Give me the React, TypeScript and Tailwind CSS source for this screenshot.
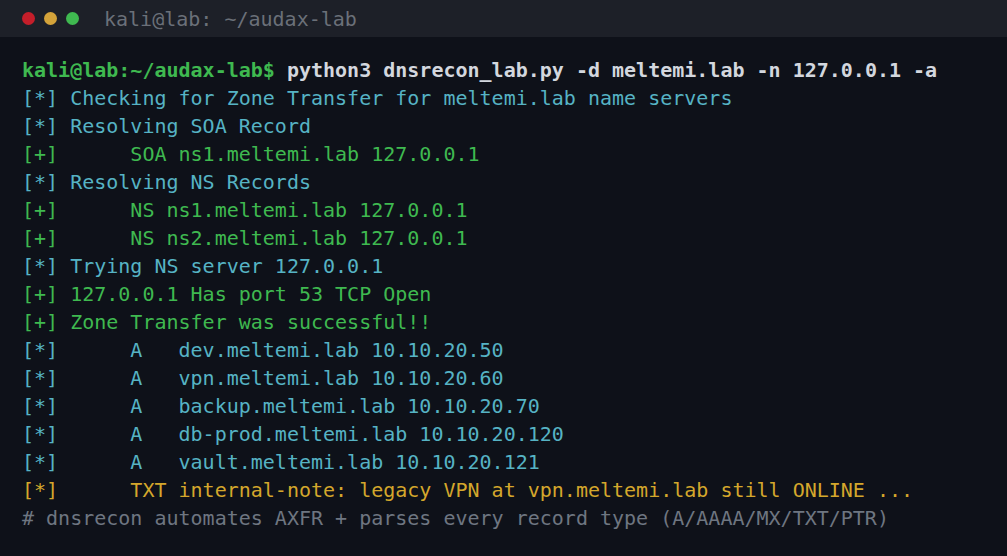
import React from 'react';

type Line = { parts: { text: string; cls: string }[] };

const cyan = 'text-[#56b3c4]';
const green = 'text-[#3fb950]';
const yellow = 'text-[#d4a72c]';
const gray = 'text-[#6e7681]';

const lines: Line[] = [
  { parts: [{ text: '[*] Checking for Zone Transfer for meltemi.lab name servers', cls: cyan }] },
  { parts: [{ text: '[*] Resolving SOA Record', cls: cyan }] },
  { parts: [{ text: '[+]      SOA ns1.meltemi.lab 127.0.0.1', cls: green }] },
  { parts: [{ text: '[*] Resolving NS Records', cls: cyan }] },
  { parts: [{ text: '[+]      NS ns1.meltemi.lab 127.0.0.1', cls: green }] },
  { parts: [{ text: '[+]      NS ns2.meltemi.lab 127.0.0.1', cls: green }] },
  { parts: [{ text: '[*] Trying NS server 127.0.0.1', cls: cyan }] },
  { parts: [{ text: '[+] 127.0.0.1 Has port 53 TCP Open', cls: green }] },
  { parts: [{ text: '[+] Zone Transfer was successful!!', cls: green }] },
  { parts: [{ text: '[*]      A   dev.meltemi.lab 10.10.20.50', cls: cyan }] },
  { parts: [{ text: '[*]      A   vpn.meltemi.lab 10.10.20.60', cls: cyan }] },
  { parts: [{ text: '[*]      A   backup.meltemi.lab 10.10.20.70', cls: cyan }] },
  { parts: [{ text: '[*]      A   db-prod.meltemi.lab 10.10.20.120', cls: cyan }] },
  { parts: [{ text: '[*]      A   vault.meltemi.lab 10.10.20.121', cls: cyan }] },
  { parts: [{ text: '[*]      TXT internal-note: legacy VPN at vpn.meltemi.lab still ONLINE ...', cls: yellow }] },
  { parts: [{ text: '# dnsrecon automates AXFR + parses every record type (A/AAAA/MX/TXT/PTR)', cls: gray }] },
];

export default function App() {
  return (
    <div className="w-[1007px] h-[556px] bg-[#0e1119] flex flex-col overflow-hidden font-['DejaVu_Sans_Mono',monospace]">
      {/* Title bar */}
      <div className="h-[37px] bg-[#1d2028] flex items-center pl-[22px] shrink-0">
        <div className="flex gap-[9px]">
          <span className="w-[13px] h-[13px] rounded-full bg-[#c41e2a]" />
          <span className="w-[13px] h-[13px] rounded-full bg-[#d4a33a]" />
          <span className="w-[13px] h-[13px] rounded-full bg-[#3fb950]" />
        </div>
        <span className="ml-[25px] text-[20px] text-[#6b7079] leading-none">kali@lab: ~/audax-lab</span>
      </div>

      {/* Body */}
      <div className="pt-[19px] pl-[22px] text-[20px] leading-[28px] whitespace-pre">
        <div>
          <span className="font-bold text-[#3fb950]">kali@lab:~/audax-lab$</span>
          <span className="font-bold text-[#d3d7de]"> python3 dnsrecon_lab.py -d meltemi.lab -n 127.0.0.1 -a</span>
        </div>
        {lines.map((line, i) => (
          <div key={i}>
            {line.parts.map((p, j) => (
              <span key={j} className={p.cls}>{p.text}</span>
            ))}
          </div>
        ))}
      </div>
    </div>
  );
}
